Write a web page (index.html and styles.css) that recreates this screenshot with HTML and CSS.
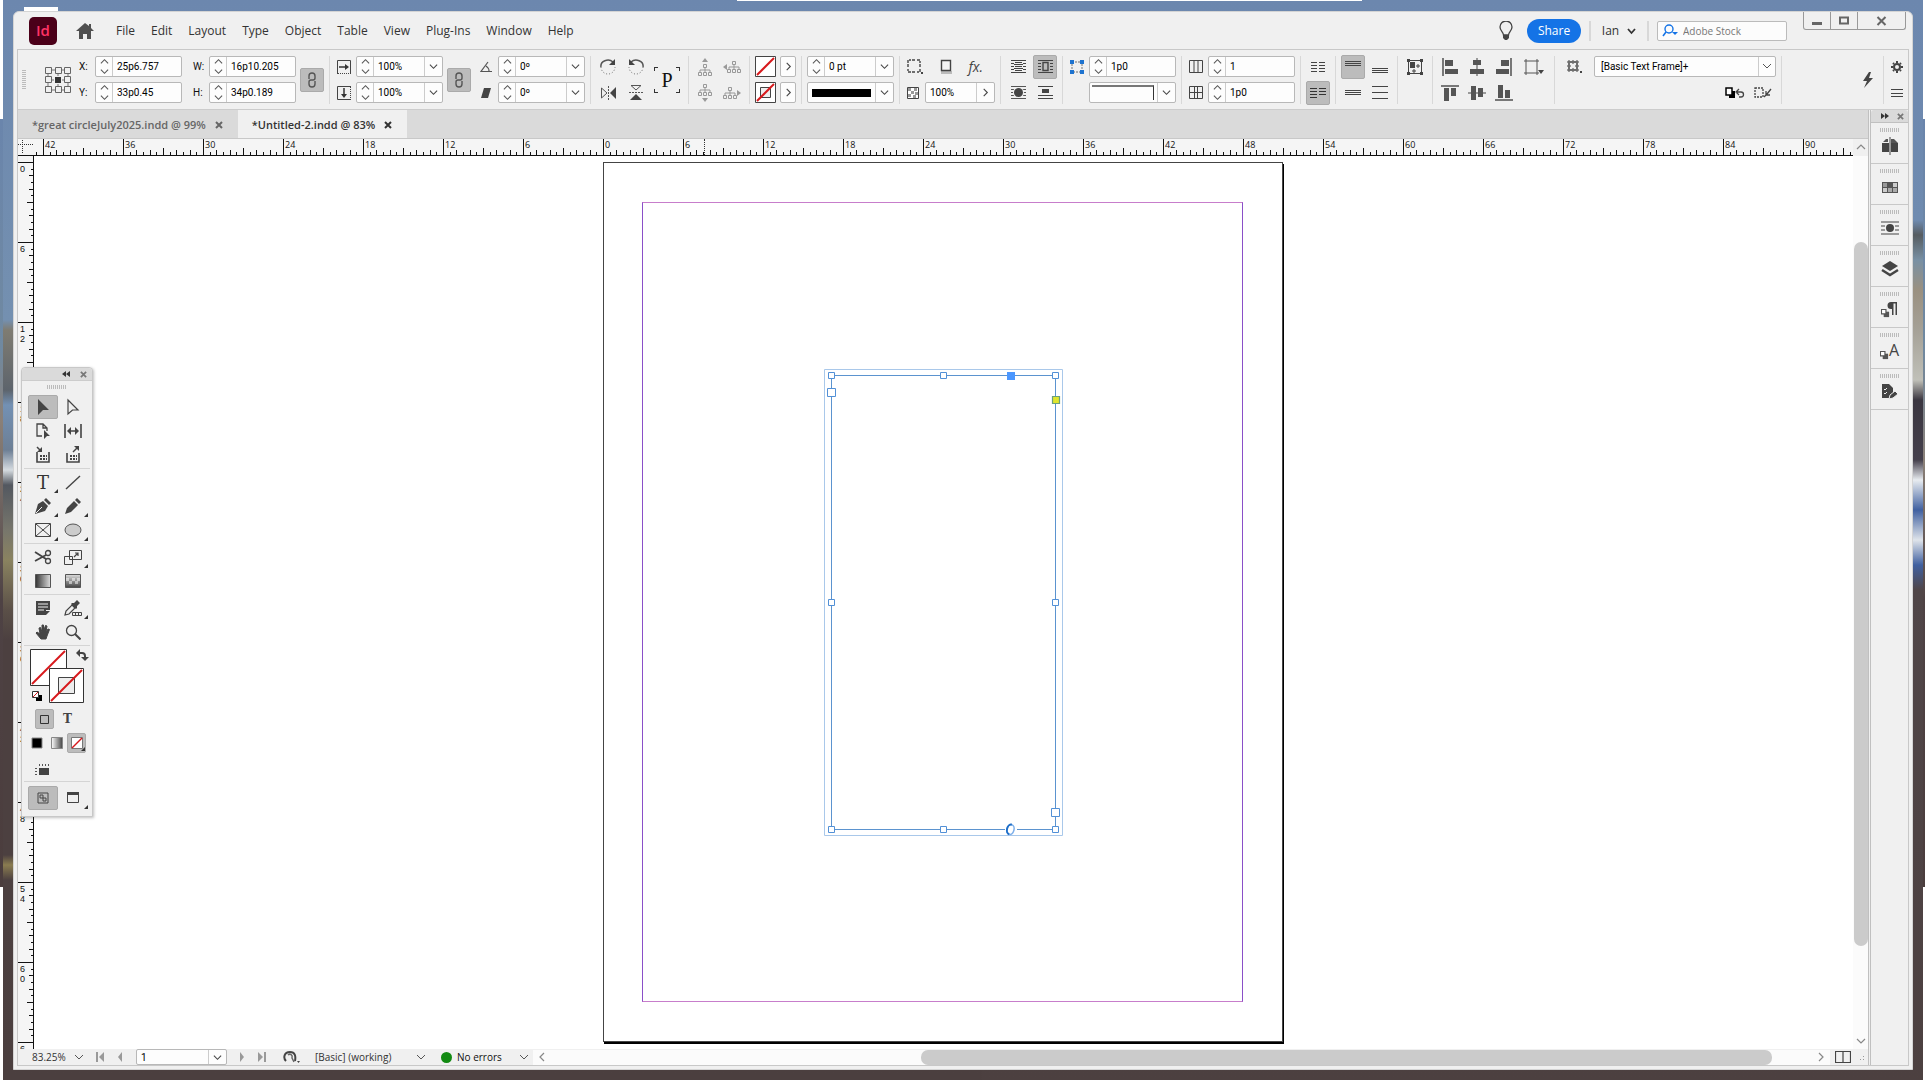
FILE: index.html
```html
<!DOCTYPE html>
<html lang="en">
<head>
    <meta charset="UTF-8">
    <meta name="viewport" content="width=device-width, initial-scale=1.0">
    <title>*Untitled-2.indd @ 83%</title>
    <link rel="stylesheet" href="styles.css">
</head>
<body>
    <!-- Shared symbols -->
    <svg class="symbols" aria-hidden="true">
        <symbol id="down" viewBox="0 0 10 10"><path d="M1 3l4 4 4-4" fill="none" stroke="currentColor" stroke-width="1.200"/></symbol>
        <symbol id="up" viewBox="0 0 10 10"><path d="M1 7l4-4 4 4" fill="none" stroke="currentColor" stroke-width="1.200"/></symbol>
        <symbol id="right" viewBox="0 0 10 10"><path d="M3 1l4 4-4 4" fill="none" stroke="currentColor" stroke-width="1.200"/></symbol>
        <symbol id="left" viewBox="0 0 10 10"><path d="M7 1L3 5l4 4" fill="none" stroke="currentColor" stroke-width="1.200"/></symbol>
        <symbol id="close" viewBox="0 0 8 8"><path d="M1 1l6 6M7 1L1 7" stroke="currentColor" stroke-width="2"/></symbol>
        <symbol id="corner" viewBox="0 0 4 4"><path d="M4 0v4H0z" fill="#333"/></symbol>
        <symbol id="chain" viewBox="0 0 10 16"><path d="M2 7V4a3 3 0 0 1 6 0v2a2 2 0 0 1-2 2H5M8 9v3a3 3 0 0 1-6 0v-2a2 2 0 0 1 2-2h1" fill="none" stroke="#555" stroke-width="1.400"/></symbol>
        <symbol id="tree" viewBox="0 0 14 12"><path d="M5.500.5h3v3h-3zM.5 8.500h3v3h-3zM5.500 8.500h3v3h-3zM10.500 8.500h3v3h-3zM7 4v4M2 8V6h10v2" fill="none" stroke="#999"/></symbol>
        <symbol id="styles" viewBox="0 0 10 10"><path d="M3 3h6v6H3z" fill="#555"/><path d="M.5.5h5v5h-5z" fill="#fff" stroke="#555" stroke-width="1.300"/></symbol>
    </svg>

    <div class="window">
        <header class="titlebar">
            <div class="logo">Id</div>
            <button class="plain home" aria-label="Home"><svg width="18" height="16"><path d="M9 0L0 8h3v8h4v-5h4v5h4V8h3l-3-3V1h-2v2z" fill="#505050"/></svg></button>
            <nav class="menu">
                <a href="#">File</a><a href="#">Edit</a><a href="#">Layout</a><a href="#">Type</a><a href="#">Object</a><a href="#">Table</a><a href="#">View</a><a href="#">Plug-Ins</a><a href="#">Window</a><a href="#">Help</a>
            </nav>
            <div class="title-right">
                <button class="plain" aria-label="Learn"><svg width="14" height="20"><path d="M4.500 14C4.500 11 1 10 1 6a6 6 0 0 1 12 0c0 4-3.500 5-3.500 8z" fill="none" stroke="#444" stroke-width="1.300"/><path d="M4 14h6v3l-2 2H6l-2-2z" fill="#444"/></svg></button>
                <button class="share">Share</button>
                <button class="plain user">Ian <svg width="9" height="8"><path d="M1 2l3.500 4L8 2" fill="none" stroke="#333" stroke-width="1.800"/></svg></button>
                <label class="stock"><svg width="18" height="13"><circle cx="7" cy="5" r="4" fill="none" stroke="#1473e6" stroke-width="1.400"/><path d="M4 8l-3 4" stroke="#1473e6" stroke-width="1.600"/><path d="M10 8h6l-3 3z" fill="#1473e6"/></svg><input type="text" placeholder="Adobe Stock" aria-label="Search Adobe Stock"></label>
            </div>
            <div class="winbtns">
                <button aria-label="Minimize"><svg width="12" height="10"><path d="M1 6h10v3H1z" fill="#666"/></svg></button>
                <button aria-label="Maximize"><svg width="12" height="10"><path d="M2 1.500h8v6H2z" fill="none" stroke="#666" stroke-width="2"/></svg></button>
                <button class="wide" aria-label="Close"><svg width="12" height="10"><path d="M1.500 1l8 8M9.500 1l-8 8" stroke="#666" stroke-width="2"/></svg></button>
            </div>
        </header>

        <div class="workspace">
            <section class="control" aria-label="Control panel">
                <div class="group first">
                    <span class="grip-v"></span>
                    <svg class="refpoint" width="26" height="26"><path d="M3 3h20v20H3zM13 3v20M3 13h20" fill="none" stroke="#777"/><g fill="#f0f0f0" stroke="#666"><path d="M.5.500h6v6h-6zM10.500.500h6v6h-6zM19.500.500h6v6h-6zM.5 9.500h6v6h-6zM19.500 9.500h6v6h-6zM.5 19.500h6v6h-6zM10.500 19.500h6v6h-6zM19.500 19.500h6v6h-6z"/></g><path d="M9 9h8v8H9z" fill="#f0f0f0"/><path d="M10 10h6v6h-6z" fill="#333"/></svg>
                    <div class="stack names"><label for="x">X:</label><label for="y">Y:</label></div>
                    <div class="stack">
                        <div class="field"><span class="spin"><button aria-label="More"><svg><use href="#up"/></svg></button><button aria-label="Less"><svg><use href="#down"/></svg></button></span><input id="x" type="text" value="25p6.757"></div>
                        <div class="field"><span class="spin"><button aria-label="More"><svg><use href="#up"/></svg></button><button aria-label="Less"><svg><use href="#down"/></svg></button></span><input id="y" type="text" value="33p0.45"></div>
                    </div>
                    <div class="stack names second"><label for="w">W:</label><label for="h">H:</label></div>
                    <div class="stack">
                        <div class="field"><span class="spin"><button aria-label="More"><svg><use href="#up"/></svg></button><button aria-label="Less"><svg><use href="#down"/></svg></button></span><input id="w" type="text" value="16p10.205"></div>
                        <div class="field"><span class="spin"><button aria-label="More"><svg><use href="#up"/></svg></button><button aria-label="Less"><svg><use href="#down"/></svg></button></span><input id="h" type="text" value="34p0.189"></div>
                    </div>
                    <button class="ib on link" aria-label="Constrain proportions"><svg width="10" height="16"><use href="#chain"/></svg></button>
                </div>

                <div class="group pad">
                    <div class="stack icons">
                        <svg width="14" height="14"><path d="M.5 14V.5h13V14" fill="none" stroke="#444"/><path d="M1 13.500h12" stroke="#444" stroke-dasharray="1 1"/><path d="M2 7h8" stroke="#333" stroke-width="1.500"/><path d="M8 4l4 3-4 3z" fill="#333"/></svg>
                        <svg width="14" height="14"><path d="M14 .5H.5v13H14" fill="none" stroke="#444"/><path d="M13.500 1v12" stroke="#444" stroke-dasharray="1 1"/><path d="M7 2v8" stroke="#333" stroke-width="1.500"/><path d="M4 8l3 4 3-4z" fill="#333"/></svg>
                    </div>
                    <div class="stack">
                        <div class="field"><span class="spin"><button aria-label="More"><svg><use href="#up"/></svg></button><button aria-label="Less"><svg><use href="#down"/></svg></button></span><input type="text" value="100%" aria-label="Scale X"><button class="drop" aria-label="Presets"><svg><use href="#down"/></svg></button></div>
                        <div class="field"><span class="spin"><button aria-label="More"><svg><use href="#up"/></svg></button><button aria-label="Less"><svg><use href="#down"/></svg></button></span><input type="text" value="100%" aria-label="Scale Y"><button class="drop" aria-label="Presets"><svg><use href="#down"/></svg></button></div>
                    </div>
                    <button class="ib on" aria-label="Constrain scaling"><svg width="10" height="16"><use href="#chain"/></svg></button>
                    <div class="stack icons angle">
                        <svg width="12" height="12"><path d="M8 1L1 10.500h11M6 5q3 2 3 5" fill="none" stroke="#555" stroke-width="1.200"/></svg>
                        <svg width="12" height="12"><path d="M4 1h7L8 11H1z" fill="#444"/></svg>
                    </div>
                    <div class="stack">
                        <div class="field"><span class="spin"><button aria-label="More"><svg><use href="#up"/></svg></button><button aria-label="Less"><svg><use href="#down"/></svg></button></span><input type="text" value="0º" aria-label="Rotation"><button class="drop" aria-label="Presets"><svg><use href="#down"/></svg></button></div>
                        <div class="field"><span class="spin"><button aria-label="More"><svg><use href="#up"/></svg></button><button aria-label="Less"><svg><use href="#down"/></svg></button></span><input type="text" value="0º" aria-label="Shear"><button class="drop" aria-label="Presets"><svg><use href="#down"/></svg></button></div>
                    </div>
                </div>

                <div class="group transform">
                    <div class="stack">
                        <button class="plain" aria-label="Rotate right"><svg width="18" height="16"><path d="M1 8a7 6 0 0 1 12-5" fill="none" stroke="#555" stroke-width="1.500"/><path d="M15 0v6H9z" fill="#444"/><path d="M1 8a7 7 0 0 0 14 0" fill="none" stroke="#666" stroke-dasharray="1 2"/></svg></button>
                        <button class="plain" aria-label="Flip horizontal"><svg width="18" height="14"><path d="M1.500 2v10L7 7z" fill="none" stroke="#555"/><path d="M16 1v12l-6-6z" fill="#444"/><path d="M8.500 0v14" stroke="#555" stroke-dasharray="2 1"/></svg></button>
                    </div>
                    <div class="stack">
                        <button class="plain" aria-label="Rotate left"><svg width="18" height="16"><path d="M16 8A7 6 0 0 0 4 3" fill="none" stroke="#555" stroke-width="1.500"/><path d="M2 0v6h6z" fill="#444"/><path d="M16 8A7 7 0 0 1 2 8" fill="none" stroke="#666" stroke-dasharray="1 2"/></svg></button>
                        <button class="plain" aria-label="Flip vertical"><svg width="16" height="17"><path d="M3 1.500h10L8 6z" fill="none" stroke="#555"/><path d="M2 16h12L8 10z" fill="#444"/><path d="M1 8.500h14" stroke="#555" stroke-dasharray="2 1"/></svg></button>
                    </div>
                    <div class="pref">P</div>
                </div>

                <div class="group transform trees">
                    <div class="stack">
                        <svg width="14" height="18"><path d="M7 0l3 4H4z" fill="#999"/><use href="#tree" y="6" width="14" height="12"/></svg>
                        <svg width="14" height="18"><use href="#tree" width="14" height="12"/><path d="M7 18l3-4H4z" fill="#999"/></svg>
                    </div>
                    <div class="stack">
                        <svg width="18" height="12"><path d="M0 6l4-3v6z" fill="#999"/><use href="#tree" x="4" width="14" height="12"/></svg>
                        <svg width="18" height="12"><path d="M18 6l-4-3v6z" fill="#999"/><use href="#tree" width="14" height="12"/></svg>
                    </div>
                </div>

                <div class="group swatches">
                    <div class="stack">
                        <button class="plain" aria-label="Fill"><svg width="21" height="21"><path d="M.5.500h20v20H.5z" fill="#fff" stroke="#444"/><path d="M2 19L19 2" stroke="#d7191c" stroke-width="2"/></svg></button>
                        <button class="plain" aria-label="Stroke"><svg width="21" height="21"><path d="M.5.500h20v20H.5z" fill="#fff" stroke="#444"/><path d="M5.500 5.500h10v10h-10z" fill="#eee" stroke="#444"/><path d="M2 19L19 2" stroke="#d7191c" stroke-width="2"/></svg></button>
                    </div>
                    <div class="stack">
                        <button class="more" aria-label="Fill options"><svg><use href="#right"/></svg></button>
                        <button class="more" aria-label="Stroke options"><svg><use href="#right"/></svg></button>
                    </div>
                </div>

                <div class="group">
                    <div class="stack">
                        <div class="field"><span class="spin"><button aria-label="More"><svg><use href="#up"/></svg></button><button aria-label="Less"><svg><use href="#down"/></svg></button></span><input type="text" value="0 pt" aria-label="Stroke weight"><button class="drop" aria-label="Presets"><svg><use href="#down"/></svg></button></div>
                        <button class="field line" aria-label="Stroke type"><span class="solid"></span><span class="drop"><svg><use href="#down"/></svg></span></button>
                    </div>
                </div>

                <div class="group pad effects">
                    <div class="stack">
                        <div class="row">
                            <button class="plain" aria-label="Corner options"><svg width="17" height="16"><path d="M1 4V1h3M10 1h3v3M13 10v3h-3M4 13H1v-3M5 1h4M5 13h4M1 5v4M13 5v4" fill="none" stroke="#444" stroke-width="1.400" stroke-dasharray="3 1"/><path d="M14 13h2v2h-2z" fill="#444"/></svg></button>
                            <button class="plain" aria-label="Drop shadow"><svg width="13" height="15"><path d="M1 12h11v3H1z" fill="#bbb"/><path d="M1.500 1.500h9v10h-9z" fill="#f4f4f4" stroke="#444" stroke-width="1.400"/></svg></button>
                            <button class="plain fx">fx<i>.</i></button>
                        </div>
                        <div class="row">
                            <svg width="12" height="12"><path d="M.5.500h11v11H.5z" fill="#fff" stroke="#444"/><path d="M1 1h3v3H1zM7 1h3v3H7zM4 4h3v3H4zM8 5h3v3H8zM1 7h3v3H1zM6 8h3v3H6z" fill="#999"/></svg>
                            <div class="field opacity"><input type="text" value="100%" aria-label="Opacity"><button class="drop" aria-label="Opacity slider"><svg><use href="#right"/></svg></button></div>
                        </div>
                    </div>
                </div>

                <div class="group">
                    <div class="stack">
                        <button class="ib" aria-label="No text wrap"><svg width="15" height="15"><path d="M0 1.500h15M0 4.500h3M12 4.500h3M0 7.500h3M12 7.500h3M0 10.500h3M12 10.500h3M0 13.500h15M4 3.500h7M3 5.500h9M4 7.500h7M3 9.500h9M4 11.500h7" stroke="#444"/></svg></button>
                        <button class="ib" aria-label="Wrap around shape"><svg width="15" height="15"><path d="M0 1.500h15M0 4.500h15M0 7.500h15M0 10.500h15M0 13.500h15" stroke="#555"/><circle cx="7.500" cy="7.500" r="5.500" fill="#f0f0f0"/><circle cx="7.500" cy="7.500" r="4.500" fill="#444"/></svg></button>
                    </div>
                    <div class="stack gap3">
                        <button class="ib on" aria-label="Wrap around bounding box"><svg width="15" height="15"><path d="M0 1.500h15M0 4.500h3M12 4.500h3M0 7.500h3M12 7.500h3M0 10.500h3M12 10.500h3M0 13.500h15" stroke="#444"/><path d="M5 3.500h5v8H5z" fill="none" stroke="#444" stroke-width="1.400"/></svg></button>
                        <button class="ib" aria-label="Jump object"><svg width="15" height="15"><path d="M0 1.500h15M0 10.500h15M0 13.500h15" stroke="#444"/><path d="M4 4h7v4H4z" fill="#444"/></svg></button>
                    </div>
                </div>

                <div class="group pad">
                    <div class="stack icons">
                        <svg width="14" height="14"><path d="M2 2h10v10H2z" fill="none" stroke="#999" stroke-width="1.400" stroke-dasharray="2 1"/><path d="M0 0h4v4H0zM10 0h4v4h-4zM0 10h4v4H0zM10 10h4v4h-4z" fill="#1e73cf"/></svg>
                        <span></span>
                    </div>
                    <div class="stack">
                        <div class="field"><span class="spin"><button aria-label="More"><svg><use href="#up"/></svg></button><button aria-label="Less"><svg><use href="#down"/></svg></button></span><input type="text" value="1p0" aria-label="Corner size"></div>
                        <button class="field line" aria-label="Corner shape"><span class="cornershape"></span><span class="drop"><svg><use href="#down"/></svg></span></button>
                    </div>
                </div>

                <div class="group pad">
                    <div class="stack icons">
                        <svg width="14" height="13"><path d="M.5.500h13v12H.5zM5 1v11M9 1v11" fill="none" stroke="#444"/></svg>
                        <svg width="14" height="13"><path d="M.5.500h13v12H.5zM5.500 1v11M8.500 1v11M1 6.500h12" fill="none" stroke="#444"/></svg>
                    </div>
                    <div class="stack">
                        <div class="field"><span class="spin"><button aria-label="More"><svg><use href="#up"/></svg></button><button aria-label="Less"><svg><use href="#down"/></svg></button></span><input type="text" value="1" aria-label="Columns"></div>
                        <div class="field"><span class="spin"><button aria-label="More"><svg><use href="#up"/></svg></button><button aria-label="Less"><svg><use href="#down"/></svg></button></span><input type="text" value="1p0" aria-label="Gutter"></div>
                    </div>
                </div>

                <div class="group">
                    <div class="stack">
                        <button class="ib" aria-label="Unbalanced columns"><svg width="14" height="12"><path d="M0 1.500h6M8 1.500h6M0 4.500h6M8 4.500h6M0 7.500h6M8 7.500h6M0 10.500h6M8 10.500h6" stroke="#444"/></svg></button>
                        <button class="ib on" aria-label="Balance columns"><svg width="16" height="12"><path d="M0 1.500h7M9 1.500h7M0 4.500h7M9 4.500h7M0 7.500h7M9 7.500h7M0 10.500h7" stroke="#333"/></svg></button>
                    </div>
                </div>

                <div class="group">
                    <div class="stack">
                        <button class="ib on" aria-label="Align top"><svg width="16" height="16"><path d="M0 2.500h16M0 4.500h16M0 6.500h16" stroke="#444"/></svg></button>
                        <button class="ib" aria-label="Align center"><svg width="16" height="16"><path d="M0 5.500h16M0 7.500h16M0 9.500h16" stroke="#444"/></svg></button>
                    </div>
                    <div class="stack gap3">
                        <button class="ib" aria-label="Align bottom"><svg width="16" height="16"><path d="M0 9.500h16M0 11.500h16M0 13.500h16" stroke="#444"/></svg></button>
                        <button class="ib" aria-label="Justify vertically"><svg width="16" height="16"><path d="M0 1.500h16M0 7.500h16M0 13.500h16" stroke="#444"/></svg></button>
                    </div>
                </div>

                <div class="group">
                    <div class="stack">
                        <button class="ib" aria-label="Auto fit"><svg width="16" height="16"><path d="M1.500 1.500h13v13h-13z" fill="none" stroke="#444"/><path d="M3 3h5v6H3zM0 0h3v3H0zM13 0h3v3h-3zM0 13h3v3H0zM13 13h3v3h-3z" fill="#444"/><path d="M9 7h4M11 5v4M5 12h4M7 10v4" stroke="#444"/></svg></button>
                        <span></span>
                    </div>
                </div>

                <div class="group">
                    <div class="stack">
                        <button class="ib" aria-label="Align left edges"><svg width="16" height="18"><path d="M1 0v18" stroke="#444" stroke-width="1.400"/><path d="M3 2h8v6H3zM3 11h13v5H3z" fill="#555"/></svg></button>
                        <button class="ib" aria-label="Align top edges"><svg width="18" height="16"><path d="M0 1h18" stroke="#444" stroke-width="1.400"/><path d="M3 3h5v13H3zM10 3h5v8h-5z" fill="#555"/></svg></button>
                    </div>
                    <div class="stack gap3">
                        <button class="ib" aria-label="Align horizontal centers"><svg width="16" height="18"><path d="M8 0v18" stroke="#444"/><path d="M4 2h8v5H4zM1 11h14v5H1z" fill="#555"/></svg></button>
                        <button class="ib" aria-label="Align vertical centers"><svg width="18" height="16"><path d="M0 8h18" stroke="#444"/><path d="M3 1h5v14H3zM10 3h5v9h-5z" fill="#555"/></svg></button>
                    </div>
                    <div class="stack gap3">
                        <button class="ib" aria-label="Align right edges"><svg width="16" height="18"><path d="M15 0v18" stroke="#444" stroke-width="1.400"/><path d="M5 2h8v6H5zM0 11h13v5H0z" fill="#555"/></svg></button>
                        <button class="ib" aria-label="Align bottom edges"><svg width="18" height="16"><path d="M0 15h18" stroke="#444" stroke-width="1.400"/><path d="M3 0h5v13H3zM10 5h5v8h-5z" fill="#555"/></svg></button>
                    </div>
                    <div class="stack gap3">
                        <button class="ib big" aria-label="Align to"><svg width="22" height="16"><path d="M3 2h11v12H3z" fill="none" stroke="#555"/><path d="M1 2h2V0M14 0v2h2M1 14h2v2M14 16v-2h2" fill="none" stroke="#555"/><path d="M15 11h6l-3 4z" fill="#444"/></svg></button>
                        <span></span>
                    </div>
                </div>

                <div class="group pad">
                    <div class="stack">
                        <button class="ib" aria-label="Object style"><svg width="15" height="14"><path d="M2 2h8v8H2z" fill="none" stroke="#444"/><path d="M1 1h2v2H1zM5 1h2v2H5zM9 1h2v2H9zM1 5h2v2H1zM9 5h2v2H9zM1 9h2v2H1zM5 9h2v2H5zM9 9h2v2H9z" fill="#eee" stroke="#444"/><path d="M13 11h2v2h-2z" fill="#444"/></svg></button>
                        <span></span>
                    </div>
                    <div class="stack objstyle">
                        <select class="styleselect" aria-label="Object style name"><option>[Basic Text Frame]+</option></select>
                        <div class="row end">
                            <button class="plain" aria-label="Clear overrides"><svg width="20" height="12"><path d="M4 4h6v7H4z" fill="#000"/><path d="M1 1h6v7H1z" fill="#fff" stroke="#000" stroke-width="1.500"/><path d="M12 5h4a2.500 2.500 0 0 1 0 5h-2M14 2l-3 3 3 3" fill="none" stroke="#444" stroke-width="1.300"/></svg></button>
                            <button class="plain" aria-label="Clear attributes"><svg width="18" height="12"><path d="M1 1h8v9H1z" fill="none" stroke="#444" stroke-width="1.300" stroke-dasharray="2 1"/><path d="M10 10l3-3M12 4v4h4M13 7l4-5" stroke="#444" stroke-width="1.300" fill="none"/></svg></button>
                        </div>
                    </div>
                </div>
                <div class="group tail">
                    <button class="plain" aria-label="Quick apply"><svg width="12" height="16"><path d="M7 0L1 9h4l-3 7 9-10H7l2-6z" fill="#444"/></svg></button>
                </div>
                <div class="group pad">
                    <div class="stack">
                        <button class="plain" aria-label="Settings"><svg width="12" height="12"><circle cx="6" cy="6" r="3" fill="none" stroke="#444" stroke-width="2"/><path d="M6 0v2M6 10v2M0 6h2M10 6h2M2 2l1 1M9 9l1 1M10 2L9 3M3 9l-1 1" stroke="#444" stroke-width="2"/></svg></button>
                        <button class="plain" aria-label="Panel menu"><svg width="12" height="10"><path d="M0 1.500h12M0 5.500h12M0 8.500h12" stroke="#444"/></svg></button>
                    </div>
                </div>
            </section>

            <div class="main">
                <div class="document">
                    <div class="tabs">
                        <a class="tab" href="#">*great circleJuly2025.indd @ 99% <svg width="8" height="8"><use href="#close"/></svg></a>
                        <a class="tab active" href="#">*Untitled-2.indd @ 83% <svg width="8" height="8"><use href="#close"/></svg></a>
                    </div>
                    <div class="hrow">
                        <svg class="origin" width="16" height="16"><path d="M4.500 1v14M0 5.500h16" stroke="#333" stroke-dasharray="1 1"/></svg>
                        <div class="hruler">
                            <svg width="100%" height="16"><defs><pattern id="ht" x="9" width="80" height="16" patternUnits="userSpaceOnUse"><path d="M.5 0v16M40.500 9v7M13.500 11v5M27.500 11v5M53.500 11v5M67.500 11v5M7.500 13v3M20.500 13v3M33.500 13v3M47.500 13v3M60.500 13v3M73.500 13v3" stroke="#111"/></pattern></defs><rect width="100%" height="16" fill="url(#ht)"/></svg>
                            <div class="hlabels"><span>42</span><span>36</span><span>30</span><span>24</span><span>18</span><span>12</span><span>6</span><span>0</span><span>6</span><span>12</span><span>18</span><span>24</span><span>30</span><span>36</span><span>42</span><span>48</span><span>54</span><span>60</span><span>66</span><span>72</span><span>78</span><span>84</span><span>90</span></div>
                            <i class="mark"></i>
                        </div>
                    </div>
                    <div class="view">
                        <div class="vruler">
                            <svg width="16" height="100%"><defs><pattern id="vt" y="6" width="16" height="80" patternUnits="userSpaceOnUse"><path d="M0 .5h16M9 40.500h7M11 13.500h5M11 27.500h5M11 53.500h5M11 67.500h5M13 7.500h3M13 20.500h3M13 33.500h3M13 47.500h3M13 60.500h3M13 73.500h3" stroke="#111"/></pattern></defs><rect width="16" height="100%" fill="url(#vt)"/></svg>
                            <div class="vlabels"><span>0</span><span>6</span><span>1<br>2</span><span>1<br>8</span><span>2<br>4</span><span>3<br>0</span><span>3<br>6</span><span>4<br>2</span><span>4<br>8</span><span>5<br>4</span><span>6<br>0</span><span>6</span></div>
                        </div>
                        <div class="canvas">
                            <div class="page">
                                <div class="margins"></div>
                                <svg class="frame" width="240" height="468">
                                    <path d="M.5.500h238v466H.5z" fill="none" stroke="#a9c8ea"/>
                                    <path d="M7.500 6.500h224v454H7.500z" fill="none" stroke="#5b93cf"/>
                                    <g fill="#fff" stroke="#5290d6">
                                        <path d="M4.500 3.500h6v6h-6zM116.500 3.500h6v6h-6zM228.500 3.500h6v6h-6zM4.500 230.500h6v6h-6zM228.500 230.500h6v6h-6zM4.500 457.500h6v6h-6zM116.500 457.500h6v6h-6zM228.500 457.500h6v6h-6z"/>
                                        <path d="M3.500 19.500h8v8h-8zM227.500 439.500h8v8h-8z"/>
                                    </g>
                                    <path d="M183 3h8v8h-8z" fill="#4b97ff"/>
                                    <path d="M228.500 27.500h7v7h-7z" fill="#dfe62c" stroke="#6b9f7c" stroke-width="1.200"/>
                                    <path d="M181 455h12v11h-12z" fill="#fff"/>
                                    <g transform="rotate(15 186.500 460.500)" fill="none">
                                        <ellipse cx="186.500" cy="460.500" rx="3.500" ry="5" stroke="#7fb0ea" stroke-width="1.600"/>
                                        <path d="M186.500 455.500a3.500 5 0 0 0 0 10" stroke="#1f6fc8" stroke-width="2"/>
                                    </g>
                                </svg>
                            </div>
                        </div>
                        <div class="vscroll">
                            <svg width="10" height="10"><use href="#up"/></svg>
                            <span class="vthumb"></span>
                            <svg width="10" height="10"><use href="#down"/></svg>
                        </div>
                    </div>
                    <footer class="status">
                        <select class="flat zoom" aria-label="Zoom"><option>83.25%</option></select>
                        <button class="plain nav" aria-label="First page"><svg width="9" height="10"><path d="M1 0v10" stroke="#999" stroke-width="2"/><path d="M8 0v10L3 5z" fill="#999"/></svg></button>
                        <button class="plain nav" aria-label="Previous page"><svg width="9" height="10"><path d="M6 0v10L2 5z" fill="#999"/></svg></button>
                        <div class="field pagebox"><input type="text" value="1" aria-label="Page"><button class="drop" aria-label="Pages"><svg><use href="#down"/></svg></button></div>
                        <button class="plain nav" aria-label="Next page"><svg width="9" height="10"><path d="M3 0v10l4-5z" fill="#999"/></svg></button>
                        <button class="plain nav" aria-label="Last page"><svg width="9" height="10"><path d="M8 0v10" stroke="#999" stroke-width="2"/><path d="M1 0v10l5-5z" fill="#999"/></svg></button>
                        <button class="plain open" aria-label="Open on bridge"><svg width="18" height="14"><path d="M3 11C0 8 1 2 7 2c5 0 6 4 5 9" fill="none" stroke="#444" stroke-width="2"/><path d="M5 5c2-2 5 0 4 3l2 4" fill="none" stroke="#666" stroke-width="1.500"/><path d="M14 11h3l-1.500 2z" fill="#444"/></svg></button>
                        <select class="flat profile" aria-label="Preflight profile"><option>[Basic] (working)</option></select>
                        <span class="dot"></span>
                        <select class="flat errors" aria-label="Preflight status"><option>No errors</option></select>
                        <div class="hscroll">
                            <svg width="10" height="10"><use href="#left"/></svg>
                            <span class="hthumb"></span>
                            <svg width="10" height="10"><use href="#right"/></svg>
                        </div>
                        <button class="plain split" aria-label="Split view"><svg width="16" height="12"><path d="M.5.500h15v11H.5zM8 0v12" fill="none" stroke="#444" stroke-width="1.200"/></svg></button>
                        <i class="resize"></i>
                    </footer>
                </div>

                <aside class="dock">
                    <div class="dockhead"><svg width="8" height="6"><path d="M0 0l4 3-4 3zM4 0l4 3-4 3z" fill="#333"/></svg><svg width="7" height="7"><use href="#close"/></svg></div>
                    <button aria-label="Pages"><svg width="18" height="18"><path d="M1 6h7v9H1zM10 6h7v9h-7z" fill="#444"/><path d="M2 5l3-3 2 0v3zM10 2h3l4 4h-7z" fill="#555"/><path d="M9 0v18" stroke="#444"/></svg></button>
                    <button aria-label="Swatches"><svg width="16" height="11"><path d="M0 0h16v11H0z" fill="#555"/><path d="M1 1h4v4H1z" fill="#999"/><path d="M11 1h4v4h-4zM1 6h4v4H1z" fill="#ccc"/><path d="M6 6h4v4H6zM11 6h4v4h-4z" fill="#aaa"/></svg></button>
                    <button aria-label="Text wrap"><svg width="18" height="14"><path d="M0 1h18M0 5h4M0 9h4M14 5h4M14 9h4M0 13h18" stroke="#444"/><circle cx="9" cy="7" r="4" fill="#444"/></svg></button>
                    <button aria-label="Layers"><svg width="18" height="18"><path d="M9 1l8 5-8 5-8-5z" fill="#444"/><path d="M1 10l8 5 8-5" fill="none" stroke="#444" stroke-width="2.500"/></svg></button>
                    <button aria-label="Paragraph styles"><svg width="18" height="18"><path d="M16 1h-6a3.500 3.500 0 0 0 0 7h1v6h1.500V2.500h2V14H16z" fill="#444"/><use href="#styles" y="8" width="9" height="9"/></svg></button>
                    <button class="char" aria-label="Character styles"><svg width="9" height="9"><use href="#styles"/></svg><b>A</b></button>
                    <button aria-label="Scripts"><svg width="18" height="18"><path d="M1 1h7l4 4v5l-4 5H1z" fill="#444"/><path d="M3 6l1 1 2-2M3 10l1 1 2-2M9 0l4 4" fill="none" stroke="#eee"/><path d="M8 16l1-4 5-4 3 3-5 4z" fill="#444" stroke="#eee"/></svg></button>
                </aside>
            </div>
        </div>

        <!-- Floating tools panel -->
        <section class="tools" aria-label="Tools">
            <div class="toolshead"><svg width="8" height="6"><path d="M4 0L0 3l4 3zM8 0L4 3l4 3z" fill="#333"/></svg><svg width="7" height="7"><use href="#close"/></svg></div>
            <span class="grip"></span>
            <div class="toolgrid">
                <button class="on" aria-label="Selection"><svg width="18" height="18"><path d="M4 1l11 11-6 0-5 5z" fill="#444"/></svg></button>
                <button aria-label="Direct selection"><svg width="18" height="18"><path d="M4 2l10 10H8.500L4 16z" fill="none" stroke="#444" stroke-width="1.200"/></svg></button>
                <button aria-label="Page"><svg width="18" height="18"><path d="M8 14H3V2h6l4 4v3M9 2v4h4" fill="none" stroke="#444" stroke-width="1.300"/><path d="M10 8l6 6h-3l-3 3z" fill="#444"/></svg></button>
                <button aria-label="Gap"><svg width="18" height="14"><path d="M1 0v14M17 0v14" stroke="#444" stroke-width="1.600"/><path d="M4 7h10" stroke="#444" stroke-width="1.500"/><path d="M7 3L3 7l4 4zM11 3l4 4-4 4z" fill="#444"/></svg></button>
                <button aria-label="Content collector"><svg width="18" height="18"><path d="M3 6v10h12V6" fill="none" stroke="#444" stroke-width="1.600"/><path d="M6 10h2M9 10h2M6 13h2M9 13h2M12 10h1M12 13h1" stroke="#444" stroke-width="2"/><path d="M3 1l3 3" stroke="#444" stroke-width="1.500"/><path d="M8 1v5H3z" fill="#444"/></svg></button>
                <button aria-label="Content placer"><svg width="18" height="18"><path d="M3 7v9h12V7" fill="none" stroke="#444" stroke-width="1.600"/><path d="M6 10h2M9 10h2M6 13h2M9 13h2M12 10h1M12 13h1" stroke="#444" stroke-width="2"/><path d="M9 6l4-4" stroke="#444" stroke-width="1.500"/><path d="M10 0h5v5z" fill="#444"/></svg></button>
            </div>
            <div class="toolgrid">
                <button class="type" aria-label="Type">T<svg class="sub" width="4" height="4"><use href="#corner"/></svg></button>
                <button aria-label="Line"><svg width="18" height="18"><path d="M2 16L16 3" stroke="#444" stroke-width="1.400"/></svg></button>
                <button aria-label="Pen"><svg width="18" height="18"><path d="M1 17l3-10 5-3 5 5-3 5z" fill="#444"/><path d="M10 3l2-2 5 5-2 2z" fill="#444"/><path d="M2 16l6-6" stroke="#eee"/></svg><svg class="sub" width="4" height="4"><use href="#corner"/></svg></button>
                <button aria-label="Pencil"><svg width="18" height="18"><path d="M1 17l2-6 7-7 4 4-7 7zM11 3l2-2 4 4-2 2z" fill="#444"/></svg><svg class="sub" width="4" height="4"><use href="#corner"/></svg></button>
                <button aria-label="Rectangle frame"><svg width="16" height="14"><path d="M.5.500h15v13H.5zM1 1l14 12M15 1L1 13" fill="none" stroke="#444"/></svg><svg class="sub" width="4" height="4"><use href="#corner"/></svg></button>
                <button aria-label="Ellipse"><svg width="18" height="14"><ellipse cx="9" cy="7" rx="8" ry="6" fill="#ccc" stroke="#555"/></svg><svg class="sub" width="4" height="4"><use href="#corner"/></svg></button>
            </div>
            <div class="toolgrid">
                <button aria-label="Scissors"><svg width="18" height="16"><path d="M1 3l11 7M1 12l11-6" stroke="#444" stroke-width="1.800"/><circle cx="14" cy="4" r="2.500" fill="none" stroke="#444" stroke-width="1.300"/><circle cx="14" cy="12" r="2.500" fill="none" stroke="#444" stroke-width="1.300"/></svg></button>
                <button aria-label="Free transform"><svg width="18" height="18"><path d="M5.500 2.500h12v9h-12zM.5 8.500h8v8h-8z" fill="none" stroke="#444"/><path d="M10 9l4-4M11 5h3v3" fill="none" stroke="#444" stroke-width="1.200"/></svg><svg class="sub" width="4" height="4"><use href="#corner"/></svg></button>
                <button aria-label="Gradient swatch"><svg width="16" height="14"><defs><linearGradient id="g1"><stop stop-color="#333"/><stop offset="1" stop-color="#ddd"/></linearGradient></defs><path d="M.5.500h15v13H.5z" fill="url(#g1)" stroke="#555"/></svg></button>
                <button aria-label="Gradient feather"><svg width="16" height="14"><defs><linearGradient id="g2" x2="0" y2="1"><stop stop-color="#ddd"/><stop offset="1" stop-color="#444"/></linearGradient></defs><path d="M.5.500h15v13H.5z" fill="url(#g2)" stroke="#555"/><path d="M1 4h3v3H1zM7 4h3v3H7zM12 4h3v3h-3zM4 7h3v3H4zM10 7h3v3h-3z" fill="#fff" opacity=".5"/></svg></button>
            </div>
            <div class="toolgrid">
                <button aria-label="Note"><svg width="16" height="16"><path d="M1 1h14v9h-4v5H1z" fill="#444"/><path d="M15 11l-4 4v-4z" fill="#444"/><path d="M3 4h10M3 7h10M3 10h6" stroke="#eee"/></svg></button>
                <button aria-label="Eyedropper"><svg width="20" height="18"><path d="M2 16l1-4 6-6 3 3-6 6z" fill="#eee" stroke="#444" stroke-width="1.200"/><path d="M9 4l2 0 3-3 3 3-3 3v2l-1 1-5-5z" fill="#444"/><path d="M9.500 13.500h9v3h-9z" fill="#eee" stroke="#444"/><path d="M12.500 14v2M15.500 14v2" stroke="#444"/></svg><svg class="sub" width="4" height="4"><use href="#corner"/></svg></button>
                <button aria-label="Hand"><svg width="16" height="16"><path d="M6 15L1 9l1-1 3 2-1-6 1.500-.5L7 8V1h1.500v6L10.500 1.500 12 2l-1 6 2-3 1.500.5L12 12l-1 3z" fill="#444" stroke="#444"/></svg></button>
                <button aria-label="Zoom"><svg width="16" height="16"><circle cx="6.500" cy="6.500" r="5" fill="none" stroke="#444" stroke-width="1.300"/><path d="M10 10l5.500 5.500" stroke="#444" stroke-width="2"/></svg></button>
            </div>
            <div class="colors">
                <svg width="64" height="57"><path d="M3.500 3.500h36v36h-36z" fill="#fff" stroke="#333"/><path d="M5 38L38 5" stroke="#d7191c" stroke-width="2"/><path d="M22.500 22.500h34v34h-34z" fill="#fff" stroke="#333"/><path d="M31.500 31.500h16v16h-16z" fill="#eee" stroke="#444"/><path d="M24 55l31-31" stroke="#d7191c" stroke-width="2"/><path d="M52 7h3a3 3 0 0 1 3 3v2" fill="none" stroke="#444" stroke-width="2"/><path d="M49 7l4-4v8zM54 11h8l-4 4z" fill="#444"/><path d="M9 49h6v6H9z" fill="#000"/><path d="M5.500 45.500h6v6h-6z" fill="#fff" stroke="#333"/><path d="M6 51l5-5" stroke="#d7191c"/></svg>
            </div>
            <div class="toolrow affects">
                <button class="on" aria-label="Formatting affects container"><svg width="9" height="9"><path d="M.5.500h8v8h-8z" fill="none" stroke="#333"/></svg></button>
                <button class="smalltype" aria-label="Formatting affects text">T</button>
            </div>
            <div class="toolrow palette">
                <button aria-label="Apply color"><svg width="12" height="12"><path d="M1 1h10v10H1z" stroke="#888"/></svg></button>
                <button aria-label="Apply gradient"><svg width="12" height="12"><defs><linearGradient id="g3"><stop stop-color="#fff"/><stop offset="1" stop-color="#444"/></linearGradient></defs><path d="M.5.500h11v11H.5z" fill="url(#g3)" stroke="#888"/></svg></button>
                <button class="on" aria-label="Apply none"><svg width="12" height="12"><path d="M.5.500h11v11H.5z" fill="#fff" stroke="#777"/><path d="M1 11L11 1" stroke="#d7191c" stroke-width="1.500"/></svg><svg class="sub" width="4" height="4"><use href="#corner"/></svg></button>
            </div>
            <div class="toolrow">
                <button class="viewopt" aria-label="View options"><svg width="14" height="12"><path d="M4 5h10v7H4z" fill="#444"/><path d="M4 2h10M1 5v7" stroke="#555" stroke-width="2" stroke-dasharray="1 2"/></svg></button>
            </div>
            <div class="toolgrid last">
                <button class="on" aria-label="Normal view"><svg width="12" height="12"><path d="M1 1h10v10H1z" fill="none" stroke="#444"/><path d="M3 3h3v3H3zM6 6h3v3H6z" fill="none" stroke="#444"/></svg></button>
                <button aria-label="Preview"><svg width="12" height="12"><path d="M.5.500h11v10H.5z" fill="none" stroke="#444"/><path d="M0 0h12v3H0z" fill="#444"/></svg><svg class="sub" width="4" height="4"><use href="#corner"/></svg></button>
            </div>
        </section>
    </div>
</body>
</html>
```
FILE: styles.css
```css
* {
    box-sizing: border-box;
}
body {
    margin: 0;
    height: 100vh;
    padding: 11px 12px 10px 13px;
    font-family: 'Open Sans', 'Noto Sans', sans-serif;
    font-size: 12px;
    color: #333;
    overflow: hidden;
    /* Desktop wallpaper behind the window */
    background:
        linear-gradient(#fff, #fff) 24px 7px / 34px 4px no-repeat,
        linear-gradient(#fff, #fff) 737px 0 / 625px 1px no-repeat,
        linear-gradient(#fff 119px, #6a85ac 119px, #7089a0 350px, #8a8078 420px, #4e4244 600px, #4b3d3d 887px, #fff 887px) 0 0 / 3px 100% no-repeat,
        linear-gradient(#fff 119px, #6a85ac 119px, #7089a0 350px, #8a8078 460px, #4e4244 600px, #4b3d3d 887px, #fff 887px) 100% 0 / 2px 100% no-repeat,
        linear-gradient(#6c87ae, #7490b0 320px, #7f7c72 330px, #5d646c 390px, #7391b4 405px, #6d7f95 450px, #d5dbe0 470px, #535860 485px, #77766c 530px, #8a8360 560px, #5b5048 610px, #4c4040 640px, #4c4040 855px, #8a7c50 865px, #4c4040 880px, #4b3f3f) 0 0 / 51% 100% no-repeat,
        linear-gradient(#6c87ae, #6f8bb0 220px, #565c60 235px, #7890a4 260px, #9a9080 290px, #a5a197 330px, #c0c0b8 380px, #3a3640 400px, #45404c 460px, #e8ecf0 480px, #4060a0 510px, #dfe4ea 540px, #4060a0 565px, #504648 590px, #4c4040) 100% 0 / 50% 100% no-repeat;
}
button {
    font: inherit;
    color: inherit;
    padding: 0;
    border: none;
    background: none;
    display: flex;
    align-items: center;
    justify-content: center;
}
a {
    color: inherit;
    text-decoration: none;
}
svg {
    display: block;
    flex: none;
}
.symbols {
    position: absolute;
    width: 0;
    height: 0;
}
.window {
    position: relative;
    height: 100%;
    display: flex;
    flex-direction: column;
    padding: 0 3px 3px;
    background: #f0f0f0;
    border: 1px solid #d4d4d4;
    border-radius: 6px 6px 0 0;
}

/* Title bar */
.titlebar {
    height: 37px;
    display: flex;
    align-items: center;
    padding: 0 3px 0 12px;
}
.logo {
    width: 28px;
    height: 28px;
    margin-right: 19px;
    border-radius: 5px;
    background: #4b0019;
    color: #ff3366;
    font-size: 15px;
    font-weight: 600;
    line-height: 26px;
    text-align: center;
}
.menu {
    display: flex;
    gap: 16px;
    margin-left: 22px;
}
.title-right {
    display: flex;
    align-items: center;
    margin-left: auto;
    margin-right: 16px;
}
.share {
    width: 54px;
    height: 24px;
    margin: 0 8px 0 14px;
    border-radius: 12px;
    background: #1473e6;
    color: #fff;
}
.user {
    width: 60px;
    height: 20px;
    gap: 8px;
    border: solid #d8d8d8;
    border-width: 0 2px;
}
.stock {
    width: 130px;
    height: 20px;
    margin-left: 8px;
    padding-left: 4px;
    display: flex;
    align-items: center;
    gap: 3px;
    border: 1px solid #bbb;
    border-radius: 2px;
    background: #fcfcfc;
}
.stock input {
    width: 90px;
    padding: 0;
    border: none;
    background: none;
    font: 10px 'Open Sans', sans-serif;
}
.stock input::placeholder {
    color: #777;
}
.winbtns {
    align-self: flex-start;
    display: flex;
    height: 18px;
    border: 1px solid #999;
    border-top: none;
    border-radius: 0 0 3px 3px;
}
.winbtns button {
    width: 27px;
    border-right: 1px solid #999;
}
.winbtns .wide {
    width: 47px;
    border-right: none;
}

/* Control panel */
.workspace {
    flex: 1;
    min-height: 0;
    display: flex;
    flex-direction: column;
    border: 1px solid #c8c8c8;
}
.control {
    height: 60px;
    flex: none;
    display: flex;
    align-items: center;
    border-bottom: 1px solid #ccc;
    font: 10px Roboto, 'Open Sans', sans-serif;
    color: #111;
}
.group {
    height: 48px;
    display: flex;
    align-items: center;
    padding: 0 5px;
    border-left: 1px solid #d8d8d8;
}
.group.pad {
    padding-left: 7px;
}
.first {
    padding-left: 4px;
    border-left: none;
}
.grip-v {
    width: 4px;
    height: 20px;
    margin-right: 19px;
    background: repeating-linear-gradient(#bbb 0 1px, transparent 1px 2px);
}
.stack {
    display: grid;
    grid-template-rows: 21px 21px;
    gap: 5px;
    align-items: center;
    justify-items: center;
}
.names {
    width: 16px;
    margin-left: 8px;
    justify-items: start;
}
.second {
    margin-left: 11px;
}
.icons {
    width: 14px;
    margin-right: 5px;
}
.angle {
    margin-left: 8px;
}
.field {
    width: 87px;
    height: 21px;
    display: flex;
    align-items: stretch;
    border: 1px solid #b8b8b8;
    border-radius: 2px;
    background: #fdfdfd;
}
.field input {
    flex: 1;
    min-width: 0;
    padding: 0 0 0 4px;
    border: none;
    background: none;
    font: inherit;
    color: #000;
}
.spin {
    width: 17px;
    display: grid;
    border-right: 1px solid #ccc;
    color: #555;
}
.spin svg {
    width: 9px;
    height: 9px;
}
.drop {
    width: 18px;
    display: flex;
    align-items: center;
    justify-content: center;
    border-left: 1px solid #ccc;
    color: #444;
}
.drop svg, .more svg {
    width: 9px;
    height: 9px;
}
.line {
    justify-content: space-between;
}
.solid {
    width: 60px;
    margin: 6px 4px 5px;
    background: #000;
}
.cornershape {
    width: 62px;
    margin: 2px 0 2px 2px;
    border-top: 2px solid #777;
    border-right: 1px solid #333;
}
.ib {
    width: 24px;
    height: 24px;
    border-radius: 2px;
}
.ib.big {
    width: 30px;
}
.ib.on {
    background: #bcbcbc;
    border: 1px solid #aaa;
}
.group > .ib {
    margin-left: 4px;
}
.gap3 {
    margin-left: 3px;
}
.transform {
    gap: 9px;
    padding: 0 8px 0 9px;
}
.trees {
    gap: 11px;
}
.pref {
    width: 26px;
    height: 26px;
    font: 20px/26px 'Liberation Serif', serif;
    text-align: center;
    /* corner brackets */
    background:
        linear-gradient(#333, #333) 0 0 / 4px 1px, linear-gradient(#333, #333) 0 0 / 1px 4px,
        linear-gradient(#333, #333) 100% 0 / 4px 1px, linear-gradient(#333, #333) 100% 0 / 1px 4px,
        linear-gradient(#333, #333) 0 100% / 4px 1px, linear-gradient(#333, #333) 0 100% / 1px 4px,
        linear-gradient(#333, #333) 100% 100% / 4px 1px, linear-gradient(#333, #333) 100% 100% / 1px 4px;
    background-repeat: no-repeat;
}
.swatches {
    gap: 4px;
}
.more {
    width: 16px;
    height: 21px;
    border: 1px solid #b8b8b8;
    border-radius: 2px;
    background: #fdfdfd;
    color: #444;
}
.row {
    width: 88px;
    display: flex;
    align-items: center;
    justify-content: space-between;
}
.fx {
    margin-right: 12px;
    font: italic 14px 'Open Sans', sans-serif;
    color: #444;
}
.opacity {
    width: 70px;
}
.objstyle {
    margin-left: 8px;
}
.styleselect {
    width: 182px;
    height: 21px;
    padding: 0 6px;
    appearance: none;
    border: 1px solid #b8b8b8;
    border-radius: 2px;
    background:
        linear-gradient(#ccc, #ccc) 163px 0 / 1px 100% no-repeat,
        linear-gradient(45deg, transparent 46%, #555 46% 58%, transparent 58%) 168px 7px / 4px 5px no-repeat,
        linear-gradient(-45deg, transparent 46%, #555 46% 58%, transparent 58%) 172px 7px / 4px 5px no-repeat,
        #fdfdfd;
    font: inherit;
    color: #000;
}
.row.end {
    width: 100%;
    gap: 9px;
    justify-content: flex-end;
    padding-right: 4px;
}
.tail {
    flex: 1;
    justify-content: flex-end;
    padding-right: 9px;
}

/* Document area */
.main {
    flex: 1;
    min-height: 0;
    display: flex;
}
.document {
    flex: 1;
    min-width: 0;
    display: flex;
    flex-direction: column;
}
.tabs {
    height: 29px;
    flex: none;
    display: flex;
    background: #dadada;
    border-bottom: 1px solid #c8c8c8;
}
.tab {
    display: flex;
    align-items: center;
    gap: 9px;
    padding: 1px 15px 0 14px;
    font-size: 11px;
    font-weight: 600;
    color: #666;
}
.tab.active {
    background: #f0f0f0;
    color: #333;
}
.hrow {
    height: 17px;
    flex: none;
    display: flex;
    margin-right: 15px;
    background: #f5f5f5;
    border-bottom: 1px solid #111;
}
.hruler {
    flex: 1;
    min-width: 0;
    position: relative;
    overflow: hidden;
}
.hlabels {
    position: absolute;
    top: 0;
    left: 9px;
    display: flex;
    font-size: 9px;
    line-height: 11px;
    color: #111;
}
.hlabels span {
    width: 80px;
    padding-left: 2px;
}
.mark {
    position: absolute;
    top: 0;
    left: 670px;
    height: 16px;
    border-left: 1px dotted #333;
}
.view {
    flex: 1;
    min-height: 0;
    display: flex;
}
.vruler {
    width: 16px;
    position: relative;
    overflow: hidden;
    background: #f5f5f5;
    border-right: 1px solid #111;
}
.vlabels {
    position: absolute;
    top: 6px;
    left: 2px;
    font: 9px/10px 'Liberation Sans', sans-serif;
    color: #111;
}
.vlabels span {
    display: block;
    height: 80px;
    padding-top: 2px;
}
.canvas {
    flex: 1;
    position: relative;
    overflow: hidden;
    background: #fff;
}
.page {
    position: absolute;
    left: 569px;
    top: 6px;
    width: 680px;
    height: 880px;
    border: 1px solid #444;
    box-shadow: 1px 2px 0 #000;
}
.margins {
    position: absolute;
    left: 38px;
    top: 39px;
    width: 601px;
    height: 800px;
    border: 1px solid #c77dcb;
    border-left-color: #8a4fc8;
    border-right-color: #8a4fc8;
}
.frame {
    position: absolute;
    left: 220px;
    top: 206px;
}
.vscroll {
    width: 15px;
    display: flex;
    flex-direction: column;
    align-items: center;
    justify-content: space-between;
    padding: 0 0 3px;
    background: #fbfbfb;
    color: #888;
}
.vscroll svg:first-child {
    margin-top: -14px;
}
.vthumb {
    width: 14px;
    height: 79%;
    border-radius: 7px;
    background: #cbcbcb;
}

/* Status bar */
.status {
    height: 16px;
    flex: none;
    display: flex;
    align-items: center;
    font-size: 10px;
}
.flat {
    height: 16px;
    padding: 0;
    appearance: none;
    border: none;
    background:
        linear-gradient(45deg, transparent 46%, #555 46% 58%, transparent 58%) calc(100% - 5px) 6px / 4px 5px no-repeat,
        linear-gradient(-45deg, transparent 46%, #555 46% 58%, transparent 58%) calc(100% - 1px) 6px / 4px 5px no-repeat;
    font: inherit;
    color: #333;
}
.zoom {
    width: 52px;
    margin: 0 12px 0 14px;
}
.nav {
    width: 9px;
    margin-right: 11px;
}
.pagebox {
    width: 91px;
    height: 16px;
    margin-right: 10px;
    font-family: Roboto, sans-serif;
}
.open {
    margin: 0 14px 0 6px;
}
.profile {
    width: 111px;
}
.dot {
    width: 11px;
    height: 11px;
    margin: 0 5px 0 15px;
    border-radius: 50%;
    background: #128a12;
}
.errors {
    width: 72px;
    margin-right: 4px;
    color: #111;
}
.hscroll {
    flex: 1;
    display: flex;
    align-items: center;
    padding: 0 4px;
    background: #fbfbfb;
    color: #888;
}
.hthumb {
    width: 66%;
    height: 15px;
    margin: 0 auto 0 29%;
    border-radius: 7px;
    background: #cbcbcb;
}
.split {
    margin: 0 5px;
}
.resize {
    width: 10px;
    height: 10px;
    margin-right: 2px;
    background: radial-gradient(#999 1px, transparent 1px) 0 0 / 3px 3px;
    clip-path: polygon(100% 0, 100% 100%, 0 100%);
}

/* Collapsed panel dock */
.dock {
    width: 40px;
    border-left: 3px double #c0c0c0;
}
.dockhead {
    height: 13px;
    display: flex;
    align-items: center;
    justify-content: space-between;
    padding: 0 4px 0 10px;
    background: #dadada;
    border-bottom: 1px solid #c0c0c0;
    border-radius: 3px 3px 0 0;
    color: #777;
}
.dock button {
    width: 100%;
    height: 41px;
    padding-top: 6px;
    border-bottom: 1px solid #c8c8c8;
    background: repeating-linear-gradient(90deg, #bbb 0 1px, transparent 1px 2px) 50% 5px / 19px 4px no-repeat;
}
.char svg {
    margin-top: 8px;
}
.char b {
    margin-bottom: 3px;
    font-size: 16px;
    font-weight: 500;
    line-height: 16px;
    color: #444;
}

/* Tools panel floats over the document */
.tools {
    position: absolute;
    left: 7px;
    top: 355px;
    width: 72px;
    padding-bottom: 5px;
    border: 1px solid #c8c8c8;
    border-radius: 4px 4px 0 0;
    background: #f0f0f0;
    box-shadow: 1px 1px 3px rgba(0, 0, 0, 0.25);
}
.toolshead {
    height: 13px;
    display: flex;
    align-items: center;
    justify-content: flex-end;
    gap: 10px;
    padding-right: 5px;
    background: #dadada;
    border-bottom: 1px solid #ccc;
    border-radius: 4px 4px 0 0;
    color: #777;
}
.grip {
    display: block;
    width: 20px;
    height: 4px;
    margin: 4px auto 5px;
    background: repeating-linear-gradient(90deg, #bbb 0 1px, transparent 1px 2px);
}
.toolgrid {
    display: grid;
    grid-template-columns: 30px 30px;
    grid-auto-rows: 24px;
    margin: 0 2px;
    padding: 1px 2px 1px 4px;
    border-bottom: 1px solid #d4d4d4;
}
.toolgrid button, .toolrow button {
    position: relative;
    border-radius: 2px;
}
.tools .on {
    background: #bcbcbc;
    border: 1px solid #aaa;
}
.sub {
    position: absolute;
    right: 0;
    bottom: 1px;
}
.type {
    font: 18px 'DejaVu Serif', serif;
    color: #333;
}
.colors {
    padding: 0 5px 4px;
}
.toolrow {
    display: flex;
    gap: 1px;
    height: 24px;
    padding: 2px 6px;
}
.toolrow button {
    width: 19px;
    height: 20px;
}
.affects {
    gap: 4px;
    padding-left: 13px;
}
.palette {
    margin-bottom: 2px;
}
.toolrow .smalltype {
    font: bold 12px 'DejaVu Serif', serif;
    color: #444;
}
.viewopt {
    margin-left: 4px;
}
.last {
    padding-top: 4px;
    border-top: 1px solid #d4d4d4;
    border-bottom: none;
}
```
